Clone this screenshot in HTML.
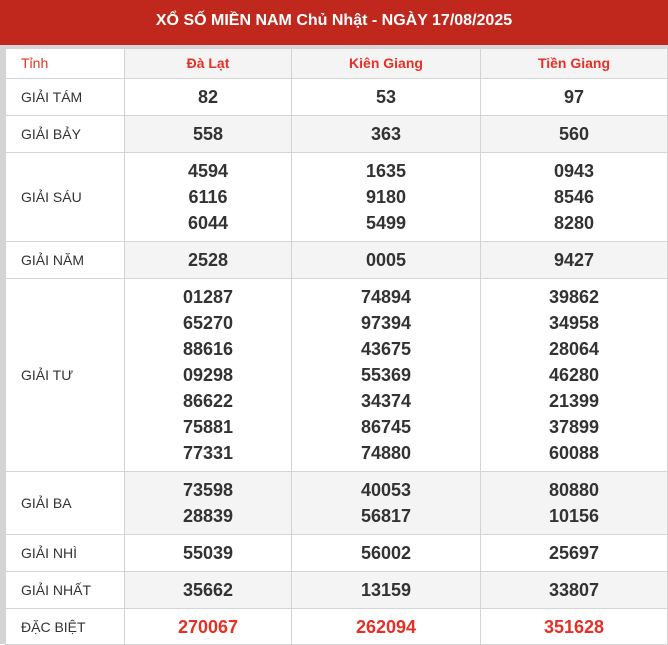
<!DOCTYPE html>
<html><head><meta charset="utf-8"><style>
body{margin:0;width:668px;height:644px;overflow:hidden;background:#fff;font-family:"Liberation Sans",sans-serif}
.top{height:45px;background:#c0281e;color:#fff;font-weight:bold;font-size:16px;text-align:center;line-height:41px}
.wrap{position:absolute;top:45px;left:0;width:668px;height:599px;background:#d4d4d4}
table{position:absolute;top:3px;left:5px;border-collapse:collapse;width:663px;background:#fff}
td{border:1px solid #d4d4d4;padding:0;text-align:center;color:#333;font-weight:bold;font-size:18px;line-height:26px}
td.l{text-align:left;padding-left:15px;font-weight:normal;font-size:14px;background:#fff;width:103px}
tr.g td{background:#f4f4f4}
tr.g td.l{background:#fff}
tr.h td{color:#e53025;font-size:14px;height:29px;line-height:29px}
tr.h td.l{font-weight:normal}
.r td{color:#e53025}
.r td.l{color:#333}
</style></head><body>
<div class="top">XỔ SỐ MIỀN NAM Chủ Nhật - NGÀY 17/08/2025</div>
<div class="wrap"><table>
<tr class="h g"><td class="l">Tỉnh</td><td style="width:166px">Đà Lạt</td><td style="width:188px">Kiên Giang</td><td>Tiền Giang</td></tr>
<tr style="height:37px"><td class="l">GIẢI TÁM</td><td>82</td><td>53</td><td>97</td></tr>
<tr class="g" style="height:37px"><td class="l">GIẢI BẢY</td><td>558</td><td>363</td><td>560</td></tr>
<tr style="height:89px"><td class="l">GIẢI SÁU</td><td>4594<br>6116<br>6044</td><td>1635<br>9180<br>5499</td><td>0943<br>8546<br>8280</td></tr>
<tr class="g" style="height:37px"><td class="l">GIẢI NĂM</td><td>2528</td><td>0005</td><td>9427</td></tr>
<tr style="height:193px"><td class="l">GIẢI TƯ</td><td>01287<br>65270<br>88616<br>09298<br>86622<br>75881<br>77331</td><td>74894<br>97394<br>43675<br>55369<br>34374<br>86745<br>74880</td><td>39862<br>34958<br>28064<br>46280<br>21399<br>37899<br>60088</td></tr>
<tr class="g" style="height:63px"><td class="l">GIẢI BA</td><td>73598<br>28839</td><td>40053<br>56817</td><td>80880<br>10156</td></tr>
<tr style="height:37px"><td class="l">GIẢI NHÌ</td><td>55039</td><td>56002</td><td>25697</td></tr>
<tr class="g" style="height:37px"><td class="l">GIẢI NHẤT</td><td>35662</td><td>13159</td><td>33807</td></tr>
<tr class="r" style="height:36px"><td class="l">ĐẶC BIỆT</td><td>270067</td><td>262094</td><td>351628</td></tr>
</table></div>
</body></html>
